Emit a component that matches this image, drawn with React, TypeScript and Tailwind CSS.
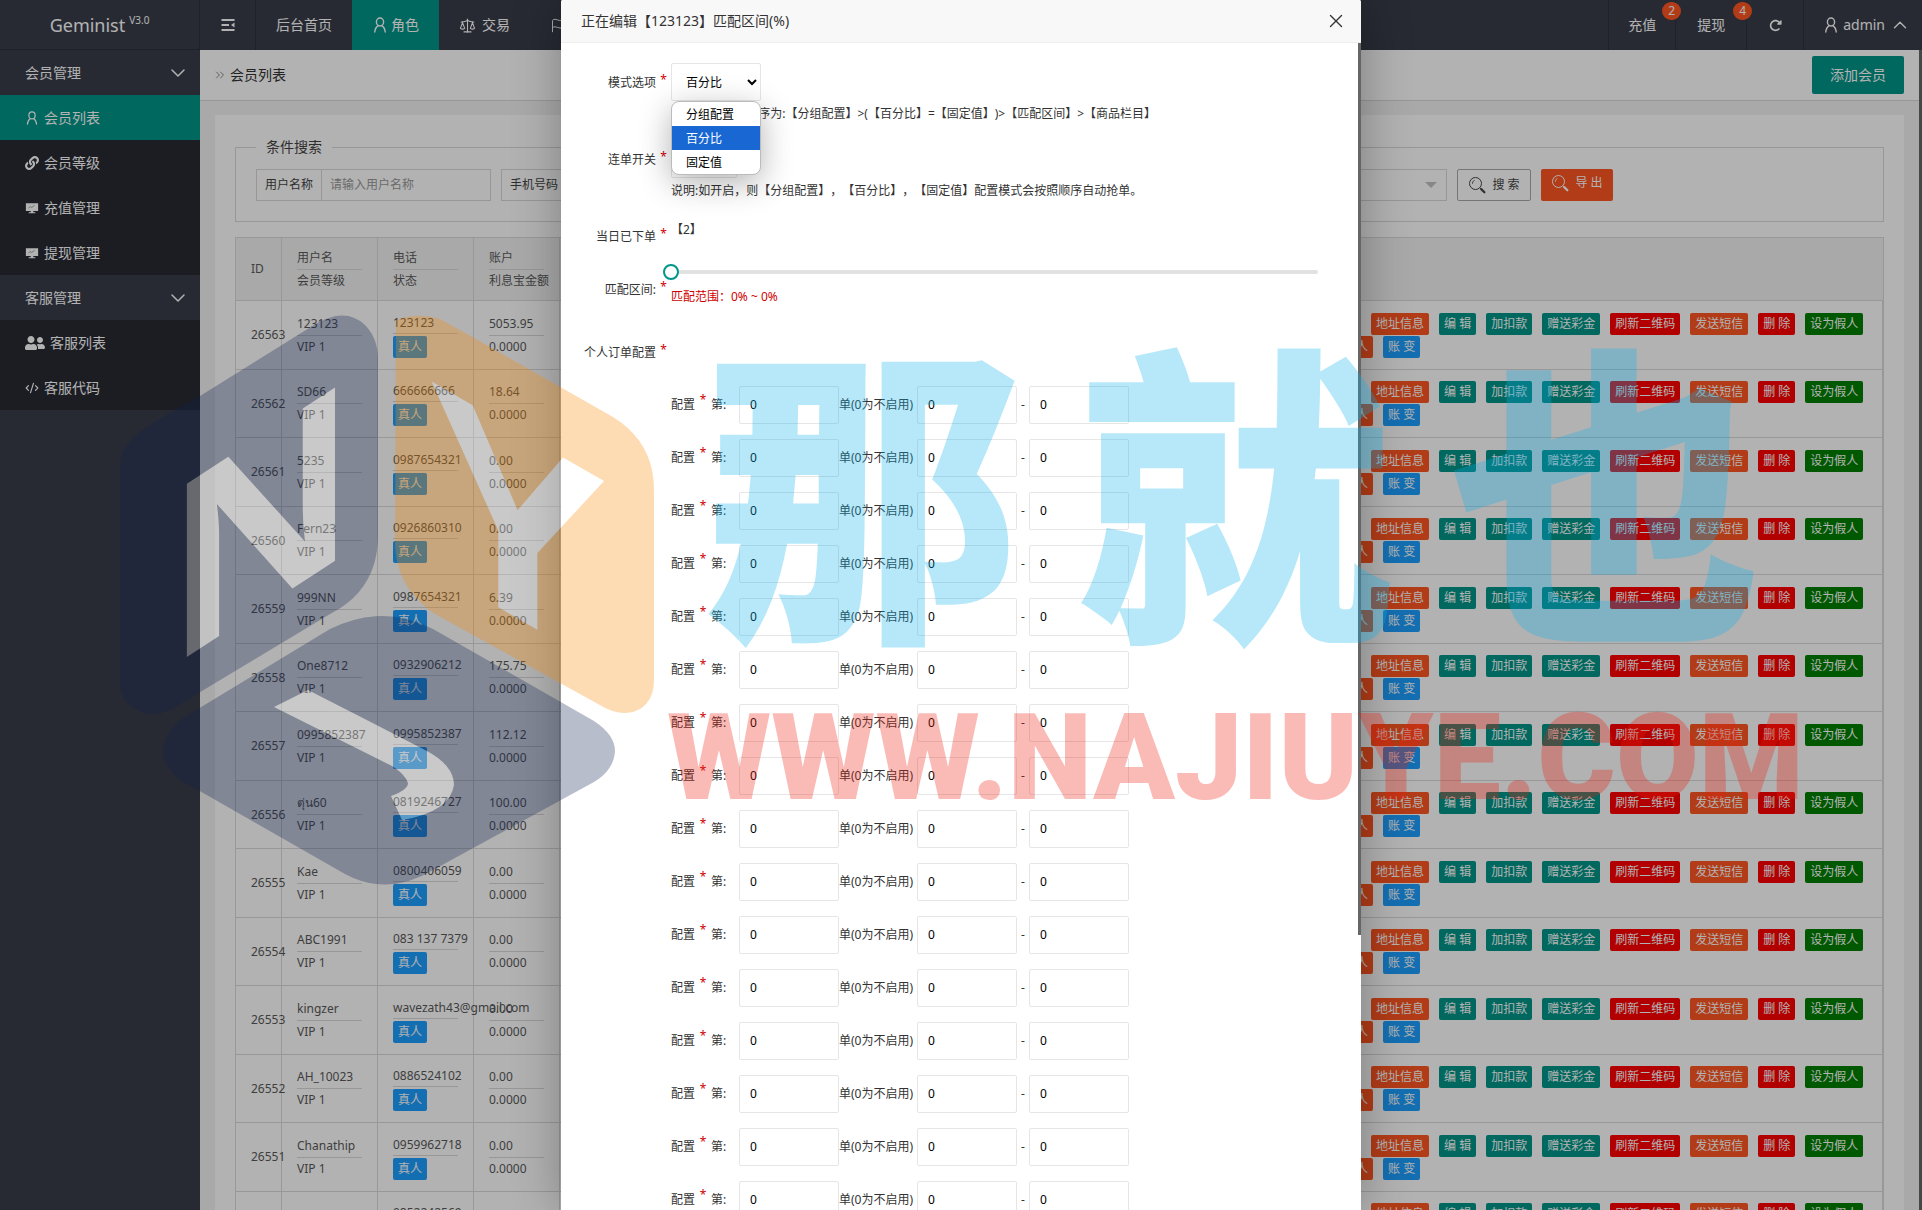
import { useState, type ReactNode } from "react";
import { ChevronDown, ChevronUp, ChevronsRight, CodeXml, Flag, Scale, X } from "lucide-react";
import { FaLink, FaUserFriends } from "react-icons/fa";
import { FaRotateRight } from "react-icons/fa6";

type Member = {
  id: number;
  name: string;
  phone: string;
  balance: string;
};

const MEMBERS: Member[] = [
  { id: 26563, name: "123123", phone: "123123", balance: "5053.95" },
  { id: 26562, name: "SD66", phone: "666666666", balance: "18.64" },
  { id: 26561, name: "5235", phone: "0987654321", balance: "0.00" },
  { id: 26560, name: "Fern23", phone: "0926860310", balance: "0.00" },
  { id: 26559, name: "999NN", phone: "0987654321", balance: "6.39" },
  { id: 26558, name: "One8712", phone: "0932906212", balance: "175.75" },
  { id: 26557, name: "0995852387", phone: "0995852387", balance: "112.12" },
  { id: 26556, name: "ตุ่น60", phone: "0819246727", balance: "100.00" },
  { id: 26555, name: "Kae", phone: "0800406059", balance: "0.00" },
  { id: 26554, name: "ABC1991", phone: "083 137 7379", balance: "0.00" },
  { id: 26553, name: "kingzer", phone: "wavezath43@gmail.com", balance: "0.00" },
  { id: 26552, name: "AH_10023", phone: "0886524102", balance: "0.00" },
  { id: 26551, name: "Chanathip", phone: "0959962718", balance: "0.00" },
  { id: 26550, name: "", phone: "0852242569", balance: "" },
];

const ACTIONS = [
  { label: "地址信息", color: "bg-[#ff5722]" },
  { label: "编 辑", color: "bg-[#009688]" },
  { label: "加扣款", color: "bg-[#009688]" },
  { label: "赠送彩金", color: "bg-[#009688]" },
  { label: "刷新二维码", color: "bg-[#ff0000]" },
  { label: "发送短信", color: "bg-[#ff5722]" },
  { label: "删 除", color: "bg-[#ff0000]" },
  { label: "设为假人", color: "bg-[#008000]" },
];

const MODES = ["分组配置", "百分比", "固定值"];
const ORDER_ROWS = Array.from({ length: 16 }, (_, i) => i);

function UserIcon({ className = "" }: { className?: string }) {
  return (
    <svg viewBox="0 0 16 16" className={className} fill="none" stroke="currentColor" strokeWidth="1.4">
      <ellipse cx="8" cy="5" rx="3.6" ry="4" />
      <path d="M6.3 8.6C4.4 9.8 3 11.6 2.8 15M9.7 8.6C11.6 9.8 13 11.6 13.2 15" strokeLinecap="round" />
    </svg>
  );
}

function ShrinkIcon() {
  return (
    <svg viewBox="0 0 16 16" className="size-4" fill="none" stroke="currentColor" strokeWidth="1.8">
      <path d="M1.5 3h13M1.5 8h7.5M1.5 13h13" />
      <path d="M14.5 5.6v4.8L11 8z" fill="currentColor" stroke="none" />
    </svg>
  );
}

function BoardIcon() {
  return (
    <svg viewBox="0 0 16 16" className="size-[14px]" fill="currentColor">
      <path d="M1 2.5h14v9H9.5v1.3h2.3v1.2H4.2v-1.2h2.3v-1.3H1z" />
      <path d="M4 8l2-1.6 1.6 1L11 5" fill="none" stroke="#777" strokeWidth=".8" />
    </svg>
  );
}

function SearchIcon() {
  return (
    <svg viewBox="0 0 18 18" className="size-[18px]" fill="none" stroke="currentColor">
      <circle cx="7.5" cy="7.5" r="6" />
      <path d="M4.4 7.8a3.2 3.2 0 0 1 2.2-3.4" strokeWidth=".8" />
      <path d="M11.8 11.8l1.3 1.2" />
      <path d="M13.2 13.1l3.2 3.2" strokeWidth="2.2" strokeLinecap="round" />
    </svg>
  );
}

function MenuGroup({ title }: { title: string }) {
  return (
    <button type="button" className="flex h-[45px] w-full items-center justify-between pr-[10px] pl-[25px]">
      {title}
      <ChevronDown className="size-6" strokeWidth={1.5} />
    </button>
  );
}

function MenuItem({ icon, label, active }: { icon: ReactNode; label: string; active?: boolean }) {
  return (
    <a
      href="#"
      className={`flex h-[45px] items-center gap-[5px] pl-[25px] ${active ? "bg-[#009688]" : "bg-black/30"}`}
    >
      {icon}
      {label}
    </a>
  );
}

function Header() {
  return (
    <header className="flex h-[50px] shrink-0 bg-[#393d49] text-sm text-white">
      <div className="flex w-[200px] items-center justify-center border-r border-b border-black/20 text-lg">
        Geminist<sup className="ml-1 text-[10px]">V3.0</sup>
      </div>
      <nav className="flex flex-1">
        <button type="button" aria-label="收起菜单" className="grid w-14 place-items-center border-r border-black/20">
          <ShrinkIcon />
        </button>
        <a href="#" className="flex items-center px-5">后台首页</a>
        <a href="#" className="flex items-center gap-[3px] bg-[#009688] px-5">
          <UserIcon className="size-4" />
          角色
        </a>
        <a href="#" className="flex items-center gap-[6px] px-5">
          <Scale className="size-[17px]" strokeWidth={1.5} />
          交易
        </a>
        <a href="#" className="flex items-center gap-[6px] px-5">
          <Flag className="size-[15px]" strokeWidth={1.5} />
          活动
        </a>
      </nav>
      <div className="flex">
        <a href="#" className="relative flex w-[67px] items-center justify-center border-l border-black/20">
          充值
          <CountBadge count={2} />
        </a>
        <a href="#" className="relative flex w-[71px] items-center justify-center border-l border-black/20">
          提现
          <CountBadge count={4} />
        </a>
        <button type="button" aria-label="刷新" className="grid w-[57px] place-items-center border-l border-black/20">
          <FaRotateRight className="size-[13px]" />
        </button>
        <button type="button" className="flex items-center gap-1 border-l border-black/20 pr-[11px] pl-[19px]">
          <UserIcon className="size-4" />
          admin
          <ChevronUp className="size-[22px]" strokeWidth={1.5} />
        </button>
      </div>
    </header>
  );
}

function CountBadge({ count }: { count: number }) {
  return (
    <span className="absolute top-[2px] -right-[6px] z-10 grid h-[18px] w-[19px] place-items-center rounded-full bg-[#ff5722] text-xs">
      {count}
    </span>
  );
}

function Sidebar() {
  return (
    <aside className="w-[200px] shrink-0 bg-[#393d49] text-sm text-white">
      <MenuGroup title="会员管理" />
      <MenuItem active icon={<UserIcon className="size-[14px]" />} label="会员列表" />
      <MenuItem icon={<FaLink className="size-[14px]" />} label="会员等级" />
      <MenuItem icon={<BoardIcon />} label="充值管理" />
      <MenuItem icon={<BoardIcon />} label="提现管理" />
      <MenuGroup title="客服管理" />
      <MenuItem icon={<FaUserFriends className="size-5" />} label="客服列表" />
      <MenuItem icon={<CodeXml className="size-[14px]" strokeWidth={2} />} label="客服代码" />
    </aside>
  );
}

function SearchField({ id, label, placeholder, width }: { id: string; label: string; placeholder: string; width: string }) {
  return (
    <div className={`flex h-8 border border-[#d8d8d8] ${width}`}>
      <label htmlFor={id} className="flex items-center border-r border-[#d8d8d8] px-2 whitespace-nowrap">
        {label}
      </label>
      <input id={id} placeholder={placeholder} className="min-w-0 flex-1 bg-transparent px-2 placeholder:text-[#999]" />
    </div>
  );
}

function SearchForm() {
  return (
    <fieldset className="border border-[#d8d8d8] px-5 pt-[10px] pb-5 text-xs text-[#444]">
      <legend className="px-[10px] text-sm leading-6">条件搜索</legend>
      <form className="flex gap-[10px]" onSubmit={(e) => e.preventDefault()}>
        <SearchField id="f-name" label="用户名称" placeholder="请输入用户名称" width="w-[235px]" />
        <SearchField id="f-phone" label="手机号码" placeholder="请输入手机号码" width="w-[235px]" />
        <SearchField id="f-parent" label="上级名称" placeholder="请输入上级名称" width="w-[227px]" />
        <SearchField id="f-time" label="注册时间" placeholder="请选择注册时间" width="w-[227px]" />
        <div className="relative flex h-8 w-[227px] border border-[#d8d8d8]">
          <label htmlFor="f-level" className="flex items-center border-r border-[#d8d8d8] px-2">
            会员等级
          </label>
          <select id="f-level" className="flex-1 appearance-none px-2">
            <option></option>
          </select>
          <span className="pointer-events-none absolute top-3 right-[9px] border-x-6 border-t-6 border-x-transparent border-t-[#c2c2c2]" />
        </div>
        <button
          type="submit"
          className="flex h-8 w-[74px] items-center justify-center gap-[6px] rounded-xs border border-[#aaa]"
        >
          <SearchIcon />搜 索
        </button>
        <button
          type="button"
          className="flex h-8 w-[72px] items-center justify-center gap-[6px] rounded-xs bg-[#ff5722] pb-1 text-white"
        >
          <SearchIcon />导 出
        </button>
      </form>
    </fieldset>
  );
}

function Stacked({ top, bottom }: { top: ReactNode; bottom: ReactNode }) {
  return (
    <div className="leading-[22px] whitespace-nowrap">
      <div className="min-h-[22px]">{top}</div>
      <div className="h-px bg-[#d8d8d8]" />
      {bottom}
    </div>
  );
}

function Tag({ label, color }: { label: string; color: string }) {
  return (
    <button type="button" className={`h-[22px] shrink-0 rounded-xs px-[5px] leading-[22px] text-white ${color}`}>
      {label}
    </button>
  );
}

function MemberTable() {
  const cell = "border-r border-b border-[#dadada] px-[15px]";
  return (
    <table className="mt-[15px] w-full table-fixed border-separate border-spacing-0 border-t border-l border-[#dadada] text-left text-xs text-[#5a5a5a]">
      <colgroup>
        <col className="w-[46px]" />
        <col className="w-24" />
        <col className="w-24" />
        <col className="w-[86px]" />
        <col />
        <col className="w-[562px]" />
      </colgroup>
      <thead className="bg-[#f2f2f2]">
        <tr className="h-[63px]">
          <th className={`${cell} font-normal`}>ID</th>
          <th className={`${cell} font-normal`}><Stacked top="用户名" bottom="会员等级" /></th>
          <th className={`${cell} font-normal`}><Stacked top="电话" bottom="状态" /></th>
          <th className={`${cell} font-normal`}><Stacked top="账户" bottom="利息宝金额" /></th>
          <th className={cell} />
          <th className={cell} />
        </tr>
      </thead>
      <tbody>
        {MEMBERS.map((m) => (
          <tr key={m.id} className="odd:h-[69px] even:h-[68px]">
            <td className={cell}>{m.id}</td>
            <td className={cell}><Stacked top={m.name} bottom="VIP 1" /></td>
            <td className={cell}>
              <div className="leading-5 whitespace-nowrap">{m.phone}</div>
              <div className="mb-[2px] h-px bg-[#d8d8d8]" />
              <Tag label="真人" color="bg-[#1e9fff]" />
            </td>
            <td className={cell}><Stacked top={m.balance} bottom="0.0000" /></td>
            <td className={cell} />
            <td className="border-r-2 border-b border-[#dadada] pl-[17px]">
              <div className="flex gap-[10px] pl-8">
                {ACTIONS.map((a) => (
                  <Tag key={a.label} label={a.label} color={a.color} />
                ))}
              </div>
              <div className="mt-px flex gap-[10px]">
                <Tag label="真人" color="bg-[#ff5722]" />
                <Tag label="账 变" color="bg-[#1e9fff]" />
              </div>
            </td>
          </tr>
        ))}
      </tbody>
    </table>
  );
}

function FormRow({ label, children }: { label: string; children?: ReactNode }) {
  return (
    <div className="mb-[15px] flex">
      <div className="h-[38px] w-[95px] shrink-0 text-right leading-10">{label}</div>
      <div className="w-[15px] shrink-0 pt-[9px] text-center text-[#d00000]">*</div>
      <div className="min-h-[38px] min-w-0 flex-1">{children}</div>
    </div>
  );
}

function NumberBox({ label }: { label: string }) {
  return (
    <input
      aria-label={label}
      defaultValue="0"
      className="h-[38px] w-[100px] rounded-xs border border-[#e6e6e6] bg-white px-[10px] text-black"
    />
  );
}

function EditDialog() {
  const [mode, setMode] = useState("百分比");
  const [range, setRange] = useState(0);

  return (
    <section
      role="dialog"
      aria-label="匹配区间"
      className="relative flex h-full w-[800px] flex-col overflow-hidden rounded-t-xs bg-white shadow-[1px_1px_50px_rgba(0,0,0,0.3)]"
    >
      <div className="flex h-[43px] shrink-0 items-center justify-between border-b border-[#eee] bg-[#f8f8f8] pr-[14px] pl-5 text-sm text-[#333]">
        <h2>正在编辑【123123】匹配区间(%)</h2>
        <button type="button" aria-label="关闭">
          <X className="size-[22px]" strokeWidth={1.5} />
        </button>
      </div>

      <form className="min-h-0 flex-1 overflow-hidden pt-5 pr-[43px] text-xs text-[#333] [text-spacing-trim:space-all]">
        <FormRow label="模式选项">
          <div className="relative w-[90px]">
            <select
              aria-label="模式选项"
              value={mode}
              onChange={(e) => setMode(e.target.value)}
              className="h-[38px] w-[90px] rounded-xs border border-[#e6e6e6] bg-white pl-[10px] text-black"
            >
              {MODES.map((m) => (
                <option key={m}>{m}</option>
              ))}
            </select>
            <ul
              role="listbox"
              className="absolute top-[38px] left-0 z-10 w-[90px] overflow-hidden rounded-lg border border-[#bbb] bg-white text-black shadow-[0_8px_32px_rgba(0,0,0,0.3)]"
            >
              {MODES.map((m) => (
                <li
                  key={m}
                  role="option"
                  aria-selected={m === mode}
                  onClick={() => setMode(m)}
                  className={`h-6 pl-[14px] leading-[26px] ${m === mode ? "bg-[#1967d2] text-white" : ""}`}
                >
                  {m}
                </li>
              ))}
            </ul>
          </div>
          <p className="h-6 leading-[26px]">说明:配置优先顺序为:【分组配置】&gt;(【百分比】=【固定值】)&gt;【匹配区间】&gt;【商品栏目】</p>
        </FormRow>
        <FormRow label="连单开关">
          <select aria-label="连单开关" className="block h-[38px] w-[66px] rounded-xs border border-[#e6e6e6] bg-white pl-[10px]">
            <option>关闭</option>
            <option>开启</option>
          </select>
          <p className="h-6 leading-[26px]">说明:如开启，则【分组配置】，【百分比】，【固定值】配置模式会按照顺序自动抢单。</p>
        </FormRow>
        <FormRow label="当日已下单">
          <span className="leading-[26px]">【2】</span>
        </FormRow>
        <FormRow label="匹配区间:">
          <div className="relative h-1 rounded-sm bg-[#e2e2e2]">
            <input
              type="range"
              aria-label="匹配区间"
              value={range}
              onChange={(e) => setRange(Number(e.target.value))}
              className="absolute -top-[6px] -left-2 h-4 w-full appearance-none bg-transparent [&::-webkit-slider-thumb]:size-4 [&::-webkit-slider-thumb]:appearance-none [&::-webkit-slider-thumb]:rounded-full [&::-webkit-slider-thumb]:border-2 [&::-webkit-slider-thumb]:border-[#009688] [&::-webkit-slider-thumb]:bg-white"
            />
          </div>
          <p className="mt-[10px] h-[34px] leading-[26px] text-[#d00000]">匹配范围：0% ~ {range}%</p>
        </FormRow>
        <FormRow label="个人订单配置" />
        {ORDER_ROWS.map((i) => (
          <div key={i} className="mb-[15px] flex h-[38px] items-center pl-[110px] leading-10 whitespace-nowrap">
            <span>配置</span>
            <span className="w-4 pb-[10px] text-center text-[#d00000]">*</span>
            <span className="w-7">第:</span>
            <NumberBox label="第几单" />
            <span className="w-[78px]">单(0为不启用)</span>
            <NumberBox label="最小值" />
            <span className="w-3 text-center">-</span>
            <NumberBox label="最大值" />
          </div>
        ))}
      </form>
      <div className="absolute top-[43px] right-0 h-[892px] w-[3px] bg-[#666]" />
    </section>
  );
}

function Watermark() {
  return (
    <div className="pointer-events-none absolute top-[310px] left-[120px] z-30 opacity-30">
      <svg viewBox="120 310 540 580" className="h-[580px] w-[540px]">
        <path
          fill="#122352"
          d="M120 683V468C120 440 140 430 200 396L314 325Q345 306 365 325Q378 338 378 360V535Q378 590 330 614L172 709Q152 719 135 709Q120 700 120 683Z"
        />
        <path
          fill="#fb8a02"
          d="M396 320Q418 312 440 319L467 334L613 417Q654 442 654 490V680Q654 700 640 709Q622 719 598 704L435 614Q395 588 395 540Z"
        />
        <path
          fill="#122352"
          d="M188 715L330 629Q383 603 433 629L594 721Q615 735 615 751Q614 770 594 782L433 870Q388 897 345 874L184 782Q163 769 163 751Q165 729 188 715Z"
        />
        <g fill="#fff" fontWeight="700" fontFamily="Liberation Sans, sans-serif">
          <text transform="translate(170 668) skewY(-33)" fontSize="252">
            N
          </text>
          <text transform="translate(427 566) skewY(30)" fontSize="272">
            Y
          </text>
        </g>
        <path
          fill="#fff"
          d="M274 707L308 690L425 750Q454 765 454 785Q450 812 402 820L391 796Q408 790 408 783Q405 774 392 766Z"
        />
      </svg>
      <div className="absolute top-3 left-[584px] flex gap-14 font-['Noto_Sans_CJK_SC',sans-serif] text-[316px] leading-[316px] font-black text-[#0cb2eb]">
        <span>那</span>
        <span>就</span>
        <span>也</span>
      </div>
      <div className="absolute top-[388px] left-[547px] font-[Roboto,sans-serif] text-[120px] leading-[120px] font-black text-[#ee1c0c]">
        WWW.NAJIUYE.COM
      </div>
    </div>
  );
}

export default function App() {
  return (
    <div className="relative flex h-screen flex-col overflow-hidden font-['Noto_Sans','Noto_Sans_CJK_SC',sans-serif]">
      <Header />
      <div className="flex min-h-0 flex-1">
        <Sidebar />
        <main className="min-w-0 flex-1 overflow-hidden border-r-3 border-[#666] bg-[#f2f2f2]">
          <div className="flex h-[51px] items-center justify-between border-b border-[#d8d8d8] bg-white pr-[15px] pl-[13px] text-sm text-[#333]">
            <div className="flex items-center gap-[3px]">
              <ChevronsRight className="size-[14px] text-[#777]" strokeWidth={1.5} />
              会员列表
            </div>
            <button type="button" className="h-[38px] rounded-xs bg-[#009688] px-[18px] text-white">
              添加会员
            </button>
          </div>
          <div className="m-[15px] mt-[14px] bg-white p-5">
            <SearchForm />
            <MemberTable />
          </div>
        </main>
      </div>

      <div className="absolute inset-0 z-20 flex justify-center bg-black/30">
        <EditDialog />
      </div>
      <Watermark />
    </div>
  );
}
